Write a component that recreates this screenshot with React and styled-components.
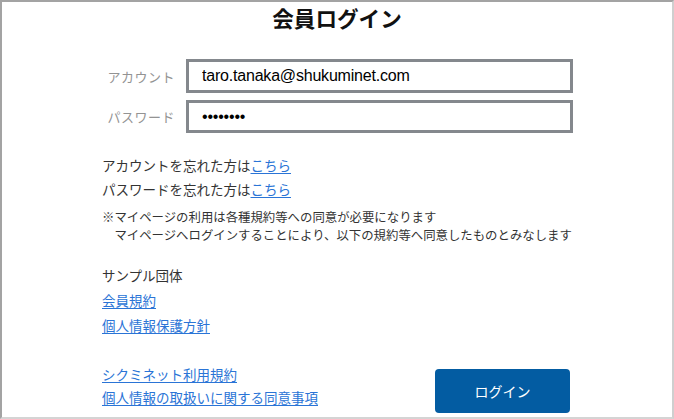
import React from "react";
import styled, { createGlobalStyle } from "styled-components";

const GlobalStyle = createGlobalStyle`
  html, body { margin: 0; padding: 0; background: #fff; }
  body { font-family: "Noto Sans CJK JP", "Liberation Sans", sans-serif; }
  * { box-sizing: border-box; }
`;

const Frame = styled.div`
  width: 674px;
  height: 419px;
  border-top: 2px solid #a3a3a3;
  border-left: 2px solid #a3a3a3;
  border-right: 2px solid #cfcfcf;
  border-bottom: 2px solid #d4d4d4;
  overflow: hidden;
  background: #fff;
  color: #333;
`;

const Title = styled.h1`
  margin: 0;
  height: 32px;
  line-height: 32px;
  text-align: center;
  font-size: 21.6px;
  font-weight: 700;
  color: #111;
`;

const Form = styled.div`
  margin-top: 25px;
  padding-left: 100px;
  display: flex;
  flex-direction: column;
  gap: 7px;
`;

const Row = styled.div`
  display: grid;
  grid-template-columns: 73px 387px;
  column-gap: 11px;
  align-items: center;
`;

const Label = styled.label`
  text-align: right;
  font-size: 13px;
  color: #939393;
  letter-spacing: 0.5px;
`;

const Input = styled.input`
  height: ${(p) => p.$h}px;
  width: 100%;
  border: 3px solid #84888d;
  padding: 0 13px;
  font-family: "Liberation Sans", Arial, sans-serif;
  font-size: 16px;
  letter-spacing: -0.2px;
  color: #000;
  background: #fff;
  outline: none;
`;

const Body = styled.div`
  padding-left: 100px;
`;

const LinkLines = styled.div`
  margin-top: 20px;
  font-size: 13.5px;
  line-height: 24px;
`;

const Line = styled.div`
  white-space: nowrap;
`;

const A = styled.a`
  color: #2a74d6;
  text-decoration: underline;
  text-underline-offset: 2px;
  cursor: pointer;
`;

const Notice = styled.div`
  margin-top: 7px;
  font-size: 12.4px;
  line-height: 18px;
  white-space: pre;
`;

const Org = styled.div`
  margin-top: 19px;
  font-size: 13.5px;
  line-height: 25px;
  display: flex;
  flex-direction: column;
  align-items: flex-start;
`;

const Bottom = styled.div`
  margin-top: 25px;
  display: flex;
  align-items: flex-start;
`;

const BottomLinks = styled.div`
  width: 333px;
  font-size: 13.5px;
  line-height: 23px;
  display: flex;
  flex-direction: column;
  align-items: flex-start;
`;

const Button = styled.button`
  margin-top: 6px;
  width: 135px;
  height: 44px;
  border: none;
  border-radius: 4px;
  background: #035ca2;
  color: #fff;
  font-family: "Noto Sans CJK JP", sans-serif;
  font-size: 14px;
  cursor: pointer;
`;

export default function App() {
  return (
    <>
      <GlobalStyle />
      <Frame>
        <Title>会員ログイン</Title>
        <Form>
          <Row>
            <Label>アカウント</Label>
            <Input $h={34} type="text" readOnly value="taro.tanaka@shukuminet.com" />
          </Row>
          <Row>
            <Label>パスワード</Label>
            <Input $h={33} type="password" readOnly value="12345678" />
          </Row>
        </Form>
        <Body>
          <LinkLines>
            <Line>アカウントを忘れた方は<A>こちら</A></Line>
            <Line>パスワードを忘れた方は<A>こちら</A></Line>
          </LinkLines>
          <Notice>
            {"※マイページの利用は各種規約等への同意が必要になります\n　マイページへログインすることにより、以下の規約等へ同意したものとみなします"}
          </Notice>
          <Org>
            <span>サンプル団体</span>
            <A>会員規約</A>
            <A>個人情報保護方針</A>
          </Org>
          <Bottom>
            <BottomLinks>
              <A>シクミネット利用規約</A>
              <A>個人情報の取扱いに関する同意事項</A>
            </BottomLinks>
            <Button>ログイン</Button>
          </Bottom>
        </Body>
      </Frame>
    </>
  );
}
